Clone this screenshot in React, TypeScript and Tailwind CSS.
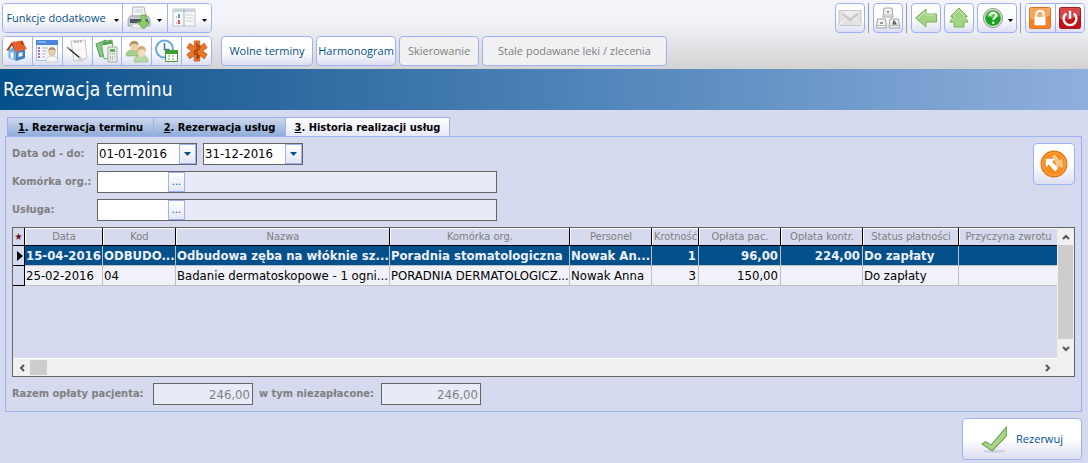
import type { ReactNode } from 'react';

const toolButton =
  'flex h-[30px] items-center justify-center bg-linear-to-b from-white from-50% to-[#dcdff2] text-[#04508a]';
const singleButton = `${toolButton} rounded border border-[#9db2f5]`;
const disabledButton =
  'flex h-[30px] items-center justify-center rounded border border-[#9db2f5] bg-[#f1f1f3] text-[#808080]';
const group = 'flex w-[210px] divide-x divide-[#9db2f5] overflow-hidden rounded border border-[#9db2f5]';
const groupButton =
  'flex h-7 items-center justify-center bg-linear-to-b from-white from-50% to-[#dcdff2] text-[#04508a]';

function Icon({ size = 24, children }: { size?: number; children: ReactNode }) {
  return (
    <svg width={size} height={size} viewBox="0 0 24 24" fill="none" aria-hidden="true" className="shrink-0">
      {children}
    </svg>
  );
}

function Caret() {
  return (
    <svg width="5" height="3" viewBox="0 0 5 3" aria-hidden="true" className="mt-1 shrink-0">
      <path d="M0 0h5L2.500 3z" fill="#000" />
    </svg>
  );
}

function PrinterIcon() {
  return (
    <Icon>
      <path d="M6 1h11l2 9H5z" fill="#f4f5f6" stroke="#aeb3b8" />
      <path d="M8 4h8M8 6h8" stroke="#c9cdd1" />
      <path d="M3 10h18l2 3v7H1v-7z" fill="#c5cbd1" stroke="#9299a0" strokeWidth=".7" />
      <path d="M3 13h18v4H3z" fill="#4d565e" />
      <path d="M5 18h14v4H5z" fill="#eef0f2" stroke="#b7bcc1" strokeWidth=".6" />
      <path d="M14 9h5v7h4l-6.500 7-6.500-7h4z" fill="#8fcb6b" stroke="#5ea33c" strokeWidth=".8" />
    </Icon>
  );
}

function BookIcon() {
  return (
    <Icon>
      <path d="M1 3h22v17H1z" fill="#f7f8f9" stroke="#bfc4ca" />
      <path d="M1 3h22v3H1z" fill="#c9d6df" />
      <path d="M12 3v17" stroke="#a9afb5" />
      <path d="M14 9h7M14 12h7M14 15h7" stroke="#cdd1d5" />
      <path d="M7 8v4" stroke="#5b9fe0" strokeWidth="2" />
      <path d="M7 14v4" stroke="#ef4b4b" strokeWidth="2" />
      <path d="M4 11h1M4 17h1" stroke="#888" />
    </Icon>
  );
}

function HomeIcon() {
  return (
    <Icon>
      <path d="M3.500 11L10 7l10 3v9l-9 3-7.500-3z" fill="#73aee3" />
      <path d="M11 13l9-3v9l-9 3z" fill="#3e7fc4" />
      <path d="M1.500 11L7 3l4.500 8.500L11 13 7 6.500 3 12z" fill="#a33b16" />
      <path d="M7 3l10-1.500L22 10l-11 3z" fill="#e4622c" />
      <path d="M16 2.500l2-.5.500 4-2-.5z" fill="#9c3a17" />
      <path d="M5.500 13l3 .8V20l-3-1z" fill="#fff" />
      <path d="M13.500 14l4-1v4l-4 1z" fill="#e8f4ff" />
    </Icon>
  );
}

function RecordIcon() {
  return (
    <Icon>
      <path d="M1.500 1.500h21v20h-21z" fill="#f3f7fc" stroke="#a8c1e4" />
      <path d="M1 1h22v5H1z" fill="#4a86de" />
      <path d="M3 3h8" stroke="#b8d2ff" />
      <path d="M3 9h2M3 12h2M3 15h2M3 18h2" stroke="#9d3bad" strokeWidth="1.500" />
      <path d="M7 9h6M7 12h5M7 15h4M7 18h3" stroke="#a8bad0" />
      <path d="M11 23c0-5 3-6 6-6s6 1 6 6z" fill="#f6f6f6" stroke="#bbb" strokeWidth=".6" />
      <ellipse cx="17" cy="12.500" rx="3.300" ry="4" fill="#f0cfad" stroke="#c09872" strokeWidth=".5" />
      <path d="M13.500 12c0-5 7-5 7 0-2-2-4-2-7 0z" fill="#b08e6a" />
    </Icon>
  );
}

function NoteIcon() {
  return (
    <Icon>
      <path d="M6 2l14-1 2 18-13 3z" fill="#f9f9f9" stroke="#b9b9b9" strokeWidth=".8" />
      <path d="M22 19l-5 4-8-1z" fill="#d5d5d5" />
      <path d="M10 2v2M13 2v2M16 1.500v2" stroke="#777" />
      <path d="M2 8l13 11" stroke="#2c2c2c" strokeWidth="1.600" />
      <path d="M2 8l3 2M14 18l2 2" stroke="#bbb" strokeWidth="1.200" />
    </Icon>
  );
}

function SheetsIcon() {
  return (
    <Icon>
      <path d="M1 5l10-4 4 13-10 4z" fill="#89c789" stroke="#529952" />
      <path d="M6 3l11-2 2 17-10 2z" fill="#eef7ee" stroke="#65a965" />
      <path d="M7 3.500l10-2 .4 3-9.800 2z" fill="#4ca44c" />
      <path d="M13 8h9v15h-9z" fill="#e8ece8" stroke="#a2aaa2" />
      <path d="M15 10h5v3h-5z" fill="#62b562" />
      <path d="M15 15h1M17 15h1M19 15h1M15 18h1M17 18h1M19 18h1M15 20h1M17 20h1" stroke="#999" />
    </Icon>
  );
}

function PeopleIcon() {
  return (
    <Icon>
      <path d="M1 17c0-5 3-6 7-6s7 2 7 6z" fill="#a7cf92" stroke="#7da868" strokeWidth=".5" />
      <ellipse cx="9" cy="7" rx="3.800" ry="5" fill="#efcda7" />
      <path d="M4.500 8C3 0 15 0 13.500 7 11 4 7 4 4.500 8z" fill="#b8976c" />
      <path d="M9 23c0-5 3-7 7-7s7 2 7 7z" fill="#b9d9a6" stroke="#82a96c" strokeWidth=".5" />
      <ellipse cx="16.500" cy="13" rx="4" ry="4.800" fill="#f6dbbb" />
      <path d="M12 13c-1-8 10-8 9-.5-3-3-6-3-9 .5z" fill="#d0ab7d" />
    </Icon>
  );
}

function ClockIcon() {
  return (
    <Icon>
      <circle cx="9.500" cy="10" r="8.500" fill="#f7fbff" stroke="#6ba6dc" strokeWidth="2" />
      <path d="M9.500 4v6.500h5" stroke="#4574a8" strokeWidth="1.500" />
      <path d="M10.500 12.500h12v10h-12z" fill="#fff" stroke="#4c9a35" />
      <path d="M10 11h13v4H10z" fill="#3f9e2d" />
      <path d="M13 17h2M17 17h2M13 20h2M17 20h2" stroke="#9cc98f" strokeWidth="1.500" />
    </Icon>
  );
}

function MedicalIcon() {
  return (
    <Icon size={22}>
      <path
        d="M9 1h6v6l5-3.500 3 5L18 12l5 3.500-3 5-5-3.500v6H9v-6l-5 3.500-3-5L6 12 1 8.500l3-5L9 7z"
        fill="#ea7524"
        stroke="#bb5414"
        strokeWidth=".8"
      />
      <path d="M12 3v18M12 6c5 1 4 4 0 5s-4 4 0 5 2 3 0 4" stroke="#943909" strokeWidth="1.200" />
    </Icon>
  );
}

function MailIcon() {
  return (
    <Icon>
      <path d="M1 4.500h22v15H1z" fill="#e2e3e1" stroke="#c7c8c6" />
      <path d="M1 19l8-7M23 19l-8-7" stroke="#f6f6f6" />
      <path d="M3 6h18l-9 8z" fill="#d0d1cf" />
      <path d="M2 5h20l-10 6.500z" fill="#eeeeed" />
      <path d="M4 8l8 6.500L20 8" stroke="#b4b5b3" />
    </Icon>
  );
}

function KeysIcon() {
  return (
    <Icon>
      <g fill="#f2f2f2" stroke="#a3a3a3">
        <path d="M8 2h8l1 9H7zM1.500 13h8l1 9H.5zM14 13h8.500l1 9H13z" />
      </g>
      <path d="M7 9h10M1 19.500h9M13.500 19.500H23" stroke="#bbb" />
      <path d="M11 6h2M4 17h3M17 18l1-3 2 3z" stroke="#444" strokeWidth="1.100" />
    </Icon>
  );
}

function ArrowIcon({ up = false }: { up?: boolean }) {
  return (
    <Icon>
      {up ? (
        <>
          <path d="M12 2l8.500 8.500H18l3 5.500h-4v5H7v-5H3l3-5.500H3.500z" fill="#a4d486" stroke="#78b356" />
          <path d="M6 10.500l6-6 6 6M7 11l-2 4M17 11l2 4" stroke="#c0e5aa" />
        </>
      ) : (
        <>
          <path d="M1.500 12L12 3v5h10.500v8H12v5z" fill="#a4d486" stroke="#78b356" />
          <path d="M4 12l7-6v3h10" stroke="#c7e8b3" />
        </>
      )}
    </Icon>
  );
}

function HelpIcon() {
  return (
    <Icon size={22}>
      <circle cx="12" cy="12" r="10.500" fill="#d7d9d7" stroke="#949694" />
      <circle cx="12" cy="12" r="8.500" fill="#19a31c" />
      <path d="M5 10c1-7 13-7 14 0-4 2-9 2-14 0z" fill="#5ccb54" />
      <path d="M9 9.500c0-4 6.500-4 6.500-.3 0 2.500-3.200 2.300-3.200 4.800M12.300 16v2.300" stroke="#fff" strokeWidth="2.300" />
    </Icon>
  );
}

function LockIcon() {
  return (
    <Icon size={22}>
      <rect x=".5" y=".5" width="23" height="23" rx="2" fill="#f58229" stroke="#d96610" />
      <path d="M1 1h22v8Q12 15 1 13z" fill="#faa65c" />
      <path d="M8 11V8c0-5 8-5 8 0v3" stroke="#fff" strokeWidth="2.300" />
      <path d="M6 11h12v9H6z" fill="#fff" />
    </Icon>
  );
}

function PowerIcon() {
  return (
    <Icon size={22}>
      <rect x=".5" y=".5" width="23" height="23" rx="2" fill="#c31319" stroke="#9d0c12" />
      <path d="M1 1h22v8Q12 15 1 13z" fill="#d9474b" />
      <path d="M8 7a7 7 0 1 0 8 0M12 4v9" stroke="#fff" strokeWidth="2.600" />
    </Icon>
  );
}

function SwapIcon() {
  return (
    <Icon size={28}>
      <circle cx="12" cy="12" r="11" fill="#f58c1c" stroke="#dc7410" />
      <circle cx="12" cy="12" r="9.800" stroke="#ffb45e" strokeWidth=".6" />
      <path d="M10 5l3-1 4 5 2-2 1 8-8-1 2-2z" fill="#fac586" />
      <path d="M5 7.500h8l-2.500 2.500 5 5.500-2.500 3-5.500-6L5 15z" fill="#fff" />
    </Icon>
  );
}

function CheckIcon() {
  return (
    <Icon size={27}>
      <ellipse cx="12" cy="22.500" rx="10" ry="1.500" fill="#cfd2df" />
      <path d="M1 16l3-2 5 3L22.500 1v8L10 22z" fill="#a9d489" stroke="#6fa44f" />
    </Icon>
  );
}

function Chevron({ d }: { d: string }) {
  return (
    <svg width="8" height="8" viewBox="0 0 8 8" fill="none" aria-hidden="true">
      <path d={d} stroke="#555" strokeWidth="2" />
    </svg>
  );
}

const field = 'flex h-[22px] border border-[#646464]';

function DateField({ id, value, label }: { id: string; value: string; label?: string }) {
  return (
    <div className={`${field} w-[100px] bg-white`}>
      <input
        id={id}
        aria-label={label}
        defaultValue={value}
        className="w-0 flex-1 px-px text-[13px] text-black outline-none"
      />
      <button
        type="button"
        aria-label="Kalendarz"
        className="flex w-[17px] items-center justify-center border border-[#9db2f5] bg-linear-to-b from-white to-[#e4e7f5]"
      >
        <svg width="7" height="4" viewBox="0 0 7 4" aria-hidden="true">
          <path d="M0 0h7L3.500 4z" fill="#04508a" />
        </svg>
      </button>
    </div>
  );
}

function LookupField({ id, label }: { id: string; label: string }) {
  return (
    <div className="flex items-center">
      <label htmlFor={id} className="w-[85px] whitespace-nowrap">
        {label}
      </label>
      <div className={`${field} w-[400px] bg-[#e8eaf7]`}>
        <input id={id} className="w-[70px] bg-white px-px text-[13px] text-black outline-none" />
        <button
          type="button"
          aria-label="Wybierz"
          className="flex w-[17px] items-center justify-center border border-[#9db2f5] bg-linear-to-b from-white to-[#e4e7f5] text-[11px] font-normal text-[#04508a]"
        >
          ...
        </button>
      </div>
    </div>
  );
}

const columns = [
  { name: 'Data', width: 'w-[78px]' },
  { name: 'Kod', width: 'w-[73px]' },
  { name: 'Nazwa', width: 'w-[214px]' },
  { name: 'Komórka org.', width: 'w-[180px]' },
  { name: 'Personel', width: 'w-[82px]' },
  { name: 'Krotność', width: 'w-[47px]', right: true },
  { name: 'Opłata pac.', width: 'w-[82px]', right: true },
  { name: 'Opłata kontr.', width: 'w-[82px]', right: true },
  { name: 'Status płatności', width: 'w-[96px]' },
  { name: 'Przyczyna zwrotu', width: '' },
];

const rows = [
  ['15-04-2016', 'ODBUDO...', 'Odbudowa zęba na włóknie sz...', 'Poradnia stomatologiczna', 'Nowak An...', '1', '96,00', '224,00', 'Do zapłaty', ''],
  ['25-02-2016', '04', 'Badanie dermatoskopowe - 1 ogni...', 'PORADNIA DERMATOLOGICZ...', 'Nowak Anna', '3', '150,00', '', 'Do zapłaty', ''],
];

function HistoryTable() {
  return (
    <table className="w-full table-fixed border-separate border-spacing-0 text-[13px] text-black">
      <thead>
        <tr className="h-[17px] text-[11px] leading-4 text-[#808080]">
          <th className="w-3 border-r border-b border-black p-0 text-[10px] text-[#6b1020]">★</th>
          {columns.map((col, i) => (
            <th
              key={col.name}
              className={`${col.width} overflow-hidden border-b border-b-black p-0 text-center font-normal whitespace-nowrap ${
                i < columns.length - 1 ? 'border-r border-r-black' : ''
              }`}
            >
              <div className="border-t border-l border-white">{col.name}</div>
            </th>
          ))}
        </tr>
      </thead>
      <tbody>
        {rows.map((row, i) => (
          <tr key={row[0]} className={i === 0 ? 'h-5 bg-[#04508a] font-bold text-[#eef1fa]' : 'h-5 bg-[#f1f2f9]'}>
            <td className="border-r border-b border-black bg-[#d5daee] p-0">
              {i === 0 && (
                <svg width="6" height="10" viewBox="0 0 6 10" aria-hidden="true" className="ml-1">
                  <path d="M0 0l6 5-6 5z" fill="#000" />
                </svg>
              )}
            </td>
            {row.map((cell, j) => (
              <td
                key={columns[j].name}
                className={`border-b border-[#c0c0c0] py-0 leading-[19px] whitespace-nowrap ${
                  columns[j].right ? 'pr-0.5 text-right' : 'pl-px'
                } ${j < columns.length - 1 ? 'border-r' : ''}`}
              >
                {cell}
              </td>
            ))}
          </tr>
        ))}
      </tbody>
    </table>
  );
}

function Toolbar() {
  const shortcuts = [
    { label: 'Start', icon: <HomeIcon /> },
    { label: 'Kartoteka', icon: <RecordIcon /> },
    { label: 'Notatki', icon: <NoteIcon /> },
    { label: 'Rozliczenia', icon: <SheetsIcon /> },
    { label: 'Pacjenci', icon: <PeopleIcon /> },
    { label: 'Terminarz', icon: <ClockIcon /> },
    { label: 'Ratownictwo', icon: <MedicalIcon /> },
  ];
  const separator = <span className="mr-1 ml-[3px] h-[30px] w-px bg-[#9a9a9a]" />;

  return (
    <header className="space-y-[3px] bg-linear-to-b from-[#f3f4fa] from-30% to-[#d3d3d3] py-[3px] pr-[3px] pl-[2px] font-['Open_Sans','Noto_Sans',sans-serif] text-[11px]">
      <div className="flex items-start justify-between">
        <div className={group}>
          <button type="button" className={`${groupButton} w-[120px] gap-2 whitespace-nowrap`}>
            Funkcje dodatkowe
            <Caret />
          </button>
          <button type="button" aria-label="Drukuj" className={`${groupButton} flex-1 gap-1.5`}>
            <PrinterIcon />
            <Caret />
          </button>
          <button type="button" aria-label="Widok" className={`${groupButton} flex-1 gap-1.5`}>
            <BookIcon />
            <Caret />
          </button>
        </div>
        <div className="flex">
          <button type="button" aria-label="Wiadomości" className={`${singleButton} w-[30px]`}>
            <MailIcon />
          </button>
          {separator}
          <button type="button" aria-label="Klawiatura" className={`${singleButton} w-[30px]`}>
            <KeysIcon />
          </button>
          {separator}
          <div className="flex gap-[3px]">
            <button type="button" aria-label="Wstecz" className={`${singleButton} w-[30px]`}>
              <ArrowIcon />
            </button>
            <button type="button" aria-label="W górę" className={`${singleButton} w-[30px]`}>
              <ArrowIcon up />
            </button>
            <button type="button" aria-label="Pomoc" className={`${singleButton} w-10 gap-1`}>
              <HelpIcon />
              <Caret />
            </button>
          </div>
          {separator}
          <div className="flex w-[60px] divide-x divide-[#9db2f5] overflow-hidden rounded border border-[#9db2f5]">
            <button type="button" aria-label="Zablokuj" className={`${groupButton} flex-1`}>
              <LockIcon />
            </button>
            <button type="button" aria-label="Zakończ" className={`${groupButton} flex-1`}>
              <PowerIcon />
            </button>
          </div>
        </div>
      </div>
      <div className="flex gap-[9px]">
        <div className={group}>
          {shortcuts.map((item) => (
            <button key={item.label} type="button" aria-label={item.label} className={`${groupButton} flex-1`}>
              {item.icon}
            </button>
          ))}
        </div>
        <div className="flex gap-[3px] whitespace-nowrap">
          <button type="button" className={`${singleButton} w-[92px]`}>Wolne terminy</button>
          <button type="button" className={`${singleButton} w-20`}>Harmonogram</button>
          <button type="button" disabled className={`${disabledButton} w-20`}>Skierowanie</button>
          <button type="button" disabled className={`${disabledButton} w-[185px]`}>Stale podawane leki / zlecenia</button>
        </div>
      </div>
    </header>
  );
}

export default function App() {
  const tab = 'h-[19px] border-t border-l border-[#9db2f5] leading-[19px] whitespace-nowrap';
  const idle = 'bg-linear-to-b from-[#cfd7ec] to-[#8facd9]';

  return (
    <div className="min-h-screen bg-[#d5daee] font-['DejaVu_Sans_Condensed','DejaVu_Sans',sans-serif] text-[11px]">
      <Toolbar />
      <h1 className="bg-linear-to-r from-[#04508a] via-[#4a81b5] to-[#8fafde] px-[3px] text-[19px] leading-[41px] text-white">
        Rezerwacja terminu
      </h1>
      <main className="pt-[7px] pr-1.5 pl-[5px]">
        <div role="tablist" className="flex px-[2px] font-bold text-black">
          <button type="button" role="tab" className={`${tab} ${idle} w-[146px]`}>
            <u>1</u>. Rezerwacja terminu
          </button>
          <button type="button" role="tab" className={`${tab} ${idle} w-[132px]`}>
            <u>2</u>. Rezerwacja usług
          </button>
          <button
            type="button"
            role="tab"
            aria-selected="true"
            className={`${tab} w-[165px] border-r bg-linear-to-b from-white to-[#e6e9f6]`}
          >
            <u>3</u>. Historia realizacji usług
          </button>
        </div>
        <section className="border border-[#9db2f5] px-1.5 py-1.5 font-bold text-[#808080]">
          <div className="flex items-start justify-between">
            <div className="space-y-1.5">
              <div className="flex items-center">
                <label htmlFor="date-from" className="w-[85px]">Data od - do:</label>
                <div className="flex gap-1.5 font-normal">
                  <DateField id="date-from" value="01-01-2016" />
                  <DateField id="date-to" value="31-12-2016" label="Data do" />
                </div>
              </div>
              <LookupField id="unit" label="Komórka org.:" />
              <LookupField id="service" label="Usługa:" />
            </div>
            <button
              type="button"
              aria-label="Odśwież"
              className="flex h-[42px] w-[42px] items-center justify-center rounded border border-[#9db2f5] bg-linear-to-b from-white from-50% to-[#dcdff2]"
            >
              <SwapIcon />
            </button>
          </div>

          <div className="mt-1.5 border border-[#646464] font-normal">
            <div className="flex h-[131px]">
              <div className="min-w-0 flex-1 border-b border-white">
                <HistoryTable />
              </div>
              <div className="flex w-[17px] flex-col items-center bg-[#f0f0f0]">
                <span className="flex h-[17px] items-center">
                  <Chevron d="M1 6l3-3 3 3" />
                </span>
                <span className="w-[15px] flex-1 bg-[#cdcdcd]" />
                <span className="flex h-5 items-center">
                  <Chevron d="M1 2l3 3 3-3" />
                </span>
              </div>
            </div>
            <div className="flex h-[17px] items-center bg-[#f0f0f0] pr-[22px]">
              <span className="flex w-[17px] justify-center">
                <Chevron d="M6 1L3 4l3 3" />
              </span>
              <span className="h-[15px] w-[17px] bg-[#cdcdcd]" />
              <span className="ml-auto">
                <Chevron d="M2 1l3 3-3 3" />
              </span>
            </div>
          </div>

          <div className="mt-1.5 flex items-center whitespace-nowrap">
            <label htmlFor="total" className="w-[141px]">Razem opłaty pacjenta:</label>
            <input
              id="total"
              readOnly
              defaultValue="246,00"
              className="h-[22px] w-[100px] border border-[#646464] bg-[#e8eaf7] px-0.5 text-right text-[13px] font-normal"
            />
            <label htmlFor="unpaid" className="ml-1.5 w-[122px]">w tym niezapłacone:</label>
            <input
              id="unpaid"
              readOnly
              defaultValue="246,00"
              className="h-[22px] w-[100px] border border-[#646464] bg-[#e8eaf7] px-0.5 text-right text-[13px] font-normal"
            />
          </div>
        </section>
        <div className="flex justify-end pt-1.5 pb-[3px]">
          <button
            type="button"
            className="flex h-[42px] w-[120px] items-center justify-center gap-2 rounded border border-[#9db2f5] bg-linear-to-b from-white from-50% to-[#dcdff2] font-['Open_Sans','Noto_Sans',sans-serif] text-[11px] text-[#04508a]"
          >
            <CheckIcon />
            Rezerwuj
          </button>
        </div>
      </main>
    </div>
  );
}
